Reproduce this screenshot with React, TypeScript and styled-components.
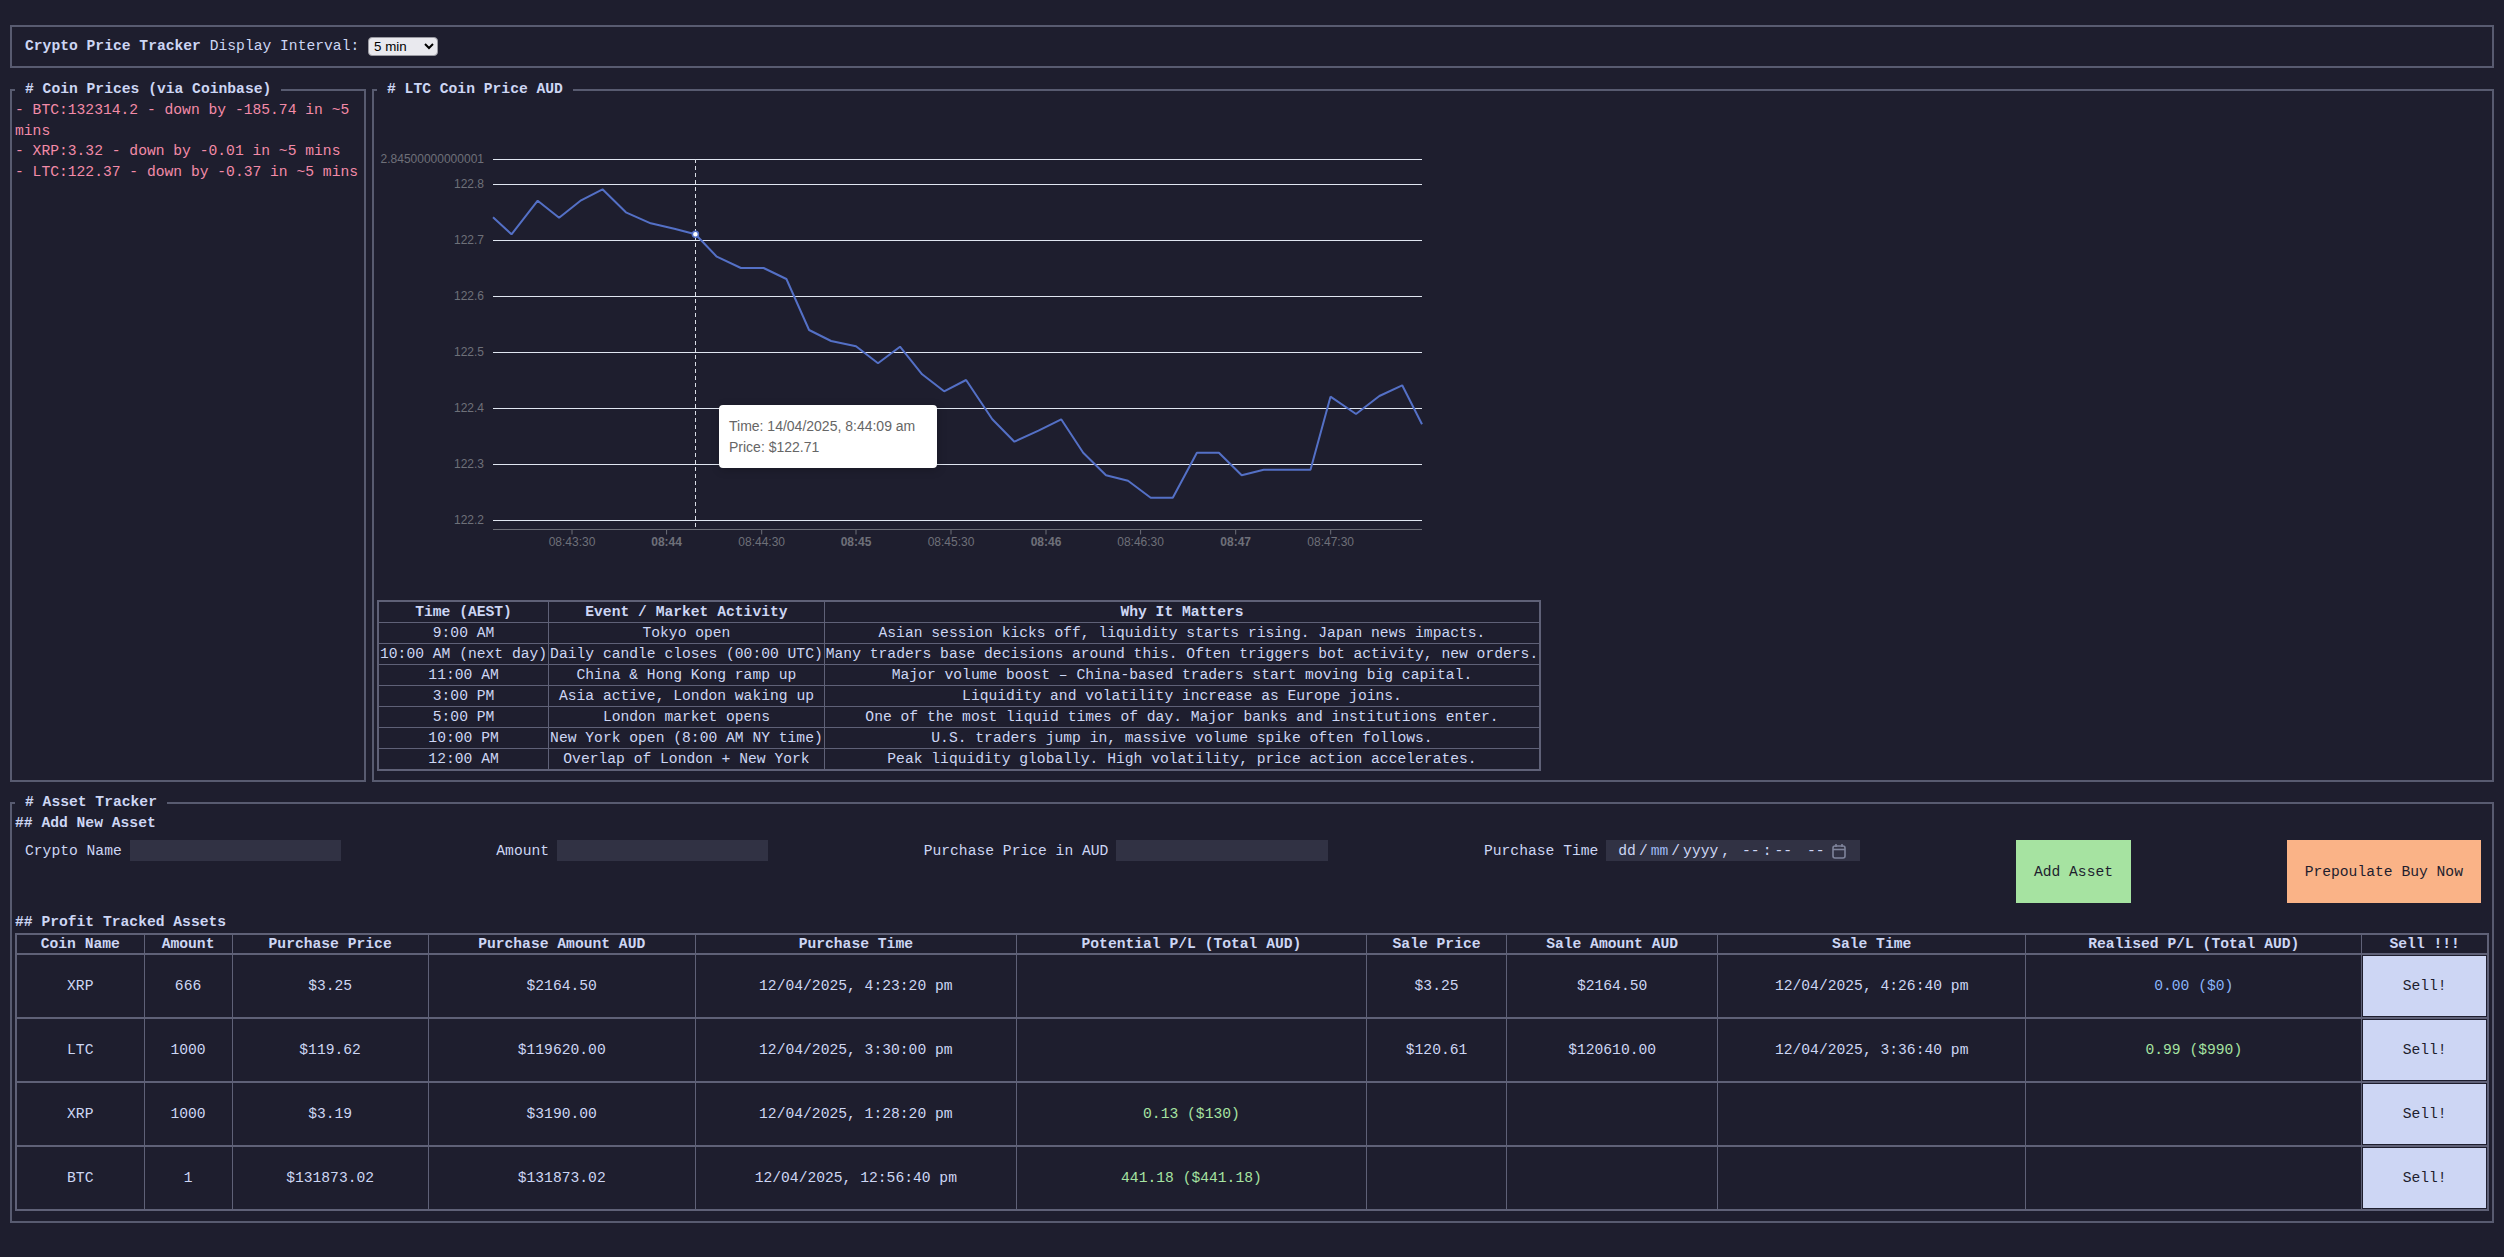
import React from "react";
import styled, { createGlobalStyle } from "styled-components";

const C = {
  base: "#1e1e2e",
  text: "#cdd6f4",
  border: "#585b70",
  cell: "#5f6177",
  surface: "#313244",
  red: "#f38ba8",
  green: "#a6e3a1",
  blue: "#89b4fa",
  peach: "#fab387",
  lavender: "#cdd6f4",
};

const GlobalStyle = createGlobalStyle`
  html, body { background: ${C.base}; }
  body {
    margin: 8px;
    color: ${C.text};
    font-family: "Liberation Mono", "DejaVu Sans Mono", monospace;
    font-size: 14.66px;
  }
  * { box-sizing: border-box; }
`;

const Page = styled.div`
  display: flex;
  flex-direction: column;
  gap: 11px;
  padding: 17px 2px 0;
`;

const HeaderBar = styled.div`
  height: 43px;
  border: 2px solid ${C.border};
  display: flex;
  align-items: center;
  padding: 0 13px 1px;
  white-space: pre;
`;

const Title = styled.b`
  font-weight: 700;
`;

const IntervalSelect = styled.select`
  width: 70px;
  height: 19px;
  font-family: "Liberation Sans", Arial, sans-serif;
  font-size: 13.33px;
  color: #000;
  background: #e9e9ee;
  border: 1px solid #9a9aa2;
  border-radius: 4px;
  padding: 0 0 0 1px;
  margin: 0;
`;

const TopRow = styled.div`
  display: flex;
  gap: 6px;
  align-items: stretch;
`;

const Panel = styled.fieldset<{ $width?: number; $padBottom?: number; $lift?: number }>`
  margin: ${(p) => -(p.$lift ?? 0)}px 0 0;
  min-width: 0;
  border: 2px solid ${C.border};
  padding: 0 3px ${(p) => p.$padBottom ?? 9}px;
  ${(p) => (p.$width ? `width: ${p.$width}px; flex: none;` : "flex: 1;")}
`;

const Legend = styled.legend`
  padding: 0 10px;
  font-weight: 700;
  line-height: 21px;
`;

const PriceLine = styled.div`
  color: ${C.red};
  line-height: 20.7px;
`;

const ChartWrap = styled.div`
  position: relative;
  width: 1100px;
  height: 500px;
`;

const ChartSvg = styled.svg`
  display: block;
  overflow: hidden;
  font-family: "Liberation Sans", Arial, sans-serif;
  font-size: 12px;
`;

const Tooltip = styled.div`
  position: absolute;
  left: 342px;
  top: 305px;
  width: 218px;
  height: 63px;
  background: #fff;
  border-radius: 4px;
  box-shadow: 1px 2px 10px rgba(0, 0, 0, 0.2);
  padding: 11px 10px;
  color: #666;
  font-family: "Liberation Sans", Arial, sans-serif;
  font-size: 14px;
  line-height: 21px;
  white-space: nowrap;
`;

const MarketTable = styled.table`
  border-collapse: collapse;
  border: 2px solid ${C.cell};
  text-align: center;
  line-height: 20px;
`;

const MTh = styled.th`
  border: 1px solid ${C.cell};
  padding: 0 1px;
  font-weight: 700;
  white-space: nowrap;
`;

const MTd = styled.td`
  border: 1px solid ${C.cell};
  padding: 0 1px;
  white-space: nowrap;
`;

const SubHeading = styled.div<{ $gap?: number }>`
  font-weight: 700;
  line-height: 21px;
  margin-top: ${(p) => p.$gap ?? 0}px;
`;

const FormRow = styled.div`
  display: flex;
  justify-content: space-between;
  align-items: flex-start;
  padding: 0 8px 0 10px;
  margin-top: 6px;
`;

const Field = styled.label`
  display: flex;
  align-items: center;
  gap: 8px;
  height: 21px;
  white-space: nowrap;
`;

const TextInput = styled.input<{ $w: number }>`
  width: ${(p) => p.$w}px;
  height: 21px;
  background: ${C.surface};
  border: none;
  outline: none;
  color: ${C.text};
  font: inherit;
  padding: 0 4px;
`;

const DateBox = styled.div`
  width: 254px;
  height: 21px;
  background: ${C.surface};
  display: flex;
  align-items: center;
  padding-left: 12px;
  white-space: pre;
`;

const DateSeg = styled.span<{ $sep?: boolean; $active?: boolean; $gapLeft?: number }>`
  margin: 0 ${(p) => (p.$sep ? 3 : 0)}px 0 ${(p) => (p.$sep ? 3 : p.$gapLeft ?? 0)}px;
  color: ${(p) => (p.$active ? "#9fb8f2" : C.text)};
`;

const CalendarIcon = styled.svg`
  margin-left: 7px;
  flex: none;
`;

const ActionButton = styled.button<{ $tone: "green" | "peach" }>`
  height: 63px;
  border: none;
  padding: 0 18px;
  background: ${(p) => (p.$tone === "green" ? C.green : C.peach)};
  color: #1e1e2e;
  font: inherit;
  cursor: pointer;
`;

const AssetTable = styled.table`
  width: 100%;
  table-layout: fixed;
  border-collapse: collapse;
  border: 2px solid ${C.cell};
  text-align: center;
`;

const ATh = styled.th`
  border: 1px solid ${C.cell};
  padding: 0 1px;
  height: 20px;
  line-height: 18px;
  font-weight: 700;
  white-space: nowrap;
`;

const ATd = styled.td`
  border: 1px solid ${C.cell};
  border-top-width: 2px;
  padding: 1px;
  white-space: nowrap;
  vertical-align: middle;
`;

const SellButton = styled.button`
  display: block;
  width: 100%;
  height: 60px;
  border: none;
  background: ${C.lavender};
  color: #1e1e2e;
  font: inherit;
  cursor: pointer;
`;

const PL = styled.span<{ $tone: "green" | "blue" }>`
  color: ${(p) => (p.$tone === "green" ? C.green : C.blue)};
`;

/* ---------------- chart data (page coordinates) ---------------- */

const points: [number, number][] = [
  [493, 217.3], [511.5, 234.3], [537.7, 200.7], [559.1, 217.7], [581.1, 200.3],
  [602.5, 189.3], [625.9, 212.3], [650.7, 223.3], [674.3, 228.8], [695.4, 234.3],
  [716.8, 256.7], [740.9, 268], [763.6, 268], [786.4, 279], [809.1, 330],
  [831.1, 341], [856, 346.3], [878, 363.3], [900, 346.7], [922.1, 374.3],
  [944.1, 391.3], [966.1, 380], [992.3, 419.3], [1014.4, 441.7], [1038.5, 430.7],
  [1061.2, 419.3], [1083.2, 452.7], [1106, 475.3], [1128, 480.7], [1150.7, 497.7],
  [1172.8, 497.7], [1196.9, 452.7], [1218.9, 452.7], [1241.7, 475.3], [1263.7, 469.7],
  [1286.4, 469.7], [1310.5, 469.7], [1330.5, 396.7], [1356, 414], [1379.4, 396],
  [1402.2, 385.3], [1422, 424.3],
];

/* the first label is shown clipped by the chart's left edge, as in the app */
const yTicks: [string, number][] = [
  ["2.84500000000001", 159],
  ["122.8", 184],
  ["122.7", 240],
  ["122.6", 296],
  ["122.5", 352],
  ["122.4", 408],
  ["122.3", 464],
  ["122.2", 520],
];

const xTicks: [string, number, boolean][] = [
  ["08:43:30", 572, false],
  ["08:44", 666.6, true],
  ["08:44:30", 761.7, false],
  ["08:45", 856, true],
  ["08:45:30", 951, false],
  ["08:46", 1046, true],
  ["08:46:30", 1140.6, false],
  ["08:47", 1235.7, true],
  ["08:47:30", 1330.7, false],
];

const GRID_L = 493;
const GRID_R = 1422;
const AXIS_Y = 529.5;

function PriceChart() {
  const path = points.map(([x, y], i) => `${i ? "L" : "M"}${x} ${y}`).join(" ");
  return (
    <ChartWrap>
      <ChartSvg width={1100} height={500} viewBox="377 100 1100 500">
        {yTicks.map(([label, y]) => (
          <g key={label}>
            <line x1={GRID_L} x2={GRID_R} y1={y + 0.5} y2={y + 0.5} stroke="#e0e6f1" strokeWidth={1} />
            <text x={484} y={y} textAnchor="end" dominantBaseline="central" fill="#6e7079">
              {label}
            </text>
          </g>
        ))}
        <line x1={GRID_L} x2={GRID_R} y1={AXIS_Y} y2={AXIS_Y} stroke="#6e7079" strokeWidth={1} />
        {xTicks.map(([label, x, bold]) => (
          <g key={label}>
            <line x1={x} x2={x} y1={AXIS_Y} y2={AXIS_Y + 5} stroke="#6e7079" strokeWidth={1} />
            <text
              x={x}
              y={542}
              textAnchor="middle"
              dominantBaseline="central"
              fill="#6e7079"
              fontWeight={bold ? 700 : 400}
            >
              {label}
            </text>
          </g>
        ))}
        <line
          x1={695.5}
          x2={695.5}
          y1={159}
          y2={AXIS_Y}
          stroke="#d9dde6"
          strokeWidth={1}
          strokeDasharray="4 3"
        />
        <path d={path} fill="none" stroke="#5470c6" strokeWidth={2} strokeLinejoin="bevel" />
        <circle cx={695.4} cy={234.3} r={3} fill="#fff" stroke="#5470c6" strokeWidth={1.5} />
      </ChartSvg>
      <Tooltip>
        <div>Time: 14/04/2025, 8:44:09 am</div>
        <div>Price: $122.71</div>
      </Tooltip>
    </ChartWrap>
  );
}

const marketRows: [string, string, string][] = [
  ["9:00 AM", "Tokyo open", "Asian session kicks off, liquidity starts rising. Japan news impacts."],
  ["10:00 AM (next day)", "Daily candle closes (00:00 UTC)", "Many traders base decisions around this. Often triggers bot activity, new orders."],
  ["11:00 AM", "China & Hong Kong ramp up", "Major volume boost – China-based traders start moving big capital."],
  ["3:00 PM", "Asia active, London waking up", "Liquidity and volatility increase as Europe joins."],
  ["5:00 PM", "London market opens", "One of the most liquid times of day. Major banks and institutions enter."],
  ["10:00 PM", "New York open (8:00 AM NY time)", "U.S. traders jump in, massive volume spike often follows."],
  ["12:00 AM", "Overlap of London + New York", "Peak liquidity globally. High volatility, price action accelerates."],
];

type Asset = {
  coin: string;
  amount: string;
  price: string;
  total: string;
  time: string;
  potential?: string;
  salePrice?: string;
  saleAmount?: string;
  saleTime?: string;
  realised?: string;
  realisedTone?: "green" | "blue";
};

const assets: Asset[] = [
  {
    coin: "XRP", amount: "666", price: "$3.25", total: "$2164.50", time: "12/04/2025, 4:23:20 pm",
    salePrice: "$3.25", saleAmount: "$2164.50", saleTime: "12/04/2025, 4:26:40 pm",
    realised: "0.00 ($0)", realisedTone: "blue",
  },
  {
    coin: "LTC", amount: "1000", price: "$119.62", total: "$119620.00", time: "12/04/2025, 3:30:00 pm",
    salePrice: "$120.61", saleAmount: "$120610.00", saleTime: "12/04/2025, 3:36:40 pm",
    realised: "0.99 ($990)", realisedTone: "green",
  },
  {
    coin: "XRP", amount: "1000", price: "$3.19", total: "$3190.00", time: "12/04/2025, 1:28:20 pm",
    potential: "0.13 ($130)",
  },
  {
    coin: "BTC", amount: "1", price: "$131873.02", total: "$131873.02", time: "12/04/2025, 12:56:40 pm",
    potential: "441.18 ($441.18)",
  },
];

const colWidths = [128, 88, 196, 267, 321, 350, 140, 211, 308, 336, 126];
const headers = [
  "Coin Name", "Amount", "Purchase Price", "Purchase Amount AUD", "Purchase Time",
  "Potential P/L (Total AUD)", "Sale Price", "Sale Amount AUD", "Sale Time",
  "Realised P/L (Total AUD)", "Sell !!!",
];

export default function App() {
  return (
    <>
      <GlobalStyle />
      <Page>
        <HeaderBar>
          <Title>Crypto Price Tracker</Title>
          <span> Display Interval: </span>
          <IntervalSelect defaultValue="5">
            <option value="1">1 min</option>
            <option value="5">5 min</option>
            <option value="15">15 min</option>
          </IntervalSelect>
        </HeaderBar>

        <TopRow>
          <Panel $width={356}>
            <Legend># Coin Prices (via Coinbase)</Legend>
            <PriceLine>- BTC:132314.2 - down by -185.74 in ~5 mins</PriceLine>
            <PriceLine>- XRP:3.32 - down by -0.01 in ~5 mins</PriceLine>
            <PriceLine>- LTC:122.37 - down by -0.37 in ~5 mins</PriceLine>
          </Panel>

          <Panel>
            <Legend># LTC Coin Price AUD</Legend>
            <PriceChart />
            <MarketTable>
              <thead>
                <tr>
                  <MTh>Time (AEST)</MTh>
                  <MTh>Event / Market Activity</MTh>
                  <MTh>Why It Matters</MTh>
                </tr>
              </thead>
              <tbody>
                {marketRows.map((r) => (
                  <tr key={r[0]}>
                    <MTd>{r[0]}</MTd>
                    <MTd>{r[1]}</MTd>
                    <MTd>{r[2]}</MTd>
                  </tr>
                ))}
              </tbody>
            </MarketTable>
          </Panel>
        </TopRow>

        <Panel $padBottom={10} $lift={1}>
          <Legend># Asset Tracker</Legend>
          <SubHeading>## Add New Asset</SubHeading>
          <FormRow>
            <Field>
              Crypto Name
              <TextInput $w={211} />
            </Field>
            <Field>
              Amount
              <TextInput $w={211} />
            </Field>
            <Field>
              Purchase Price in AUD
              <TextInput $w={212} />
            </Field>
            <Field>
              Purchase Time
              <DateBox>
                <DateSeg>dd</DateSeg>
                <DateSeg $sep>/</DateSeg>
                <DateSeg $active>mm</DateSeg>
                <DateSeg $sep>/</DateSeg>
                <DateSeg>yyyy</DateSeg>
                <DateSeg $sep>,</DateSeg>
                <DateSeg $gapLeft={9}>--</DateSeg>
                <DateSeg $sep>:</DateSeg>
                <DateSeg>--</DateSeg>
                <DateSeg $gapLeft={15}>--</DateSeg>
                <CalendarIcon width="14" height="16" viewBox="0 0 14 16">
                  <rect x="1" y="3" width="12" height="12" rx="2" fill="none" stroke="#7f849c" strokeWidth="1.6" />
                  <line x1="1" y1="6.5" x2="13" y2="6.5" stroke="#7f849c" strokeWidth="1.6" />
                  <line x1="4" y1="1" x2="4" y2="4" stroke="#7f849c" strokeWidth="1.6" />
                  <line x1="10" y1="1" x2="10" y2="4" stroke="#7f849c" strokeWidth="1.6" />
                </CalendarIcon>
              </DateBox>
            </Field>
            <ActionButton $tone="green">Add Asset</ActionButton>
            <ActionButton $tone="peach">Prepoulate Buy Now</ActionButton>
          </FormRow>

          <SubHeading $gap={9}>## Profit Tracked Assets</SubHeading>
          <AssetTable>
            <colgroup>
              {colWidths.map((w, i) => (
                <col key={i} style={{ width: w }} />
              ))}
            </colgroup>
            <thead>
              <tr>
                {headers.map((h) => (
                  <ATh key={h}>{h}</ATh>
                ))}
              </tr>
            </thead>
            <tbody>
              {assets.map((a, i) => (
                <tr key={i}>
                  <ATd>{a.coin}</ATd>
                  <ATd>{a.amount}</ATd>
                  <ATd>{a.price}</ATd>
                  <ATd>{a.total}</ATd>
                  <ATd>{a.time}</ATd>
                  <ATd>{a.potential && <PL $tone="green">{a.potential}</PL>}</ATd>
                  <ATd>{a.salePrice}</ATd>
                  <ATd>{a.saleAmount}</ATd>
                  <ATd>{a.saleTime}</ATd>
                  <ATd>{a.realised && <PL $tone={a.realisedTone ?? "green"}>{a.realised}</PL>}</ATd>
                  <ATd>
                    <SellButton>Sell!</SellButton>
                  </ATd>
                </tr>
              ))}
            </tbody>
          </AssetTable>
        </Panel>
      </Page>
    </>
  );
}
